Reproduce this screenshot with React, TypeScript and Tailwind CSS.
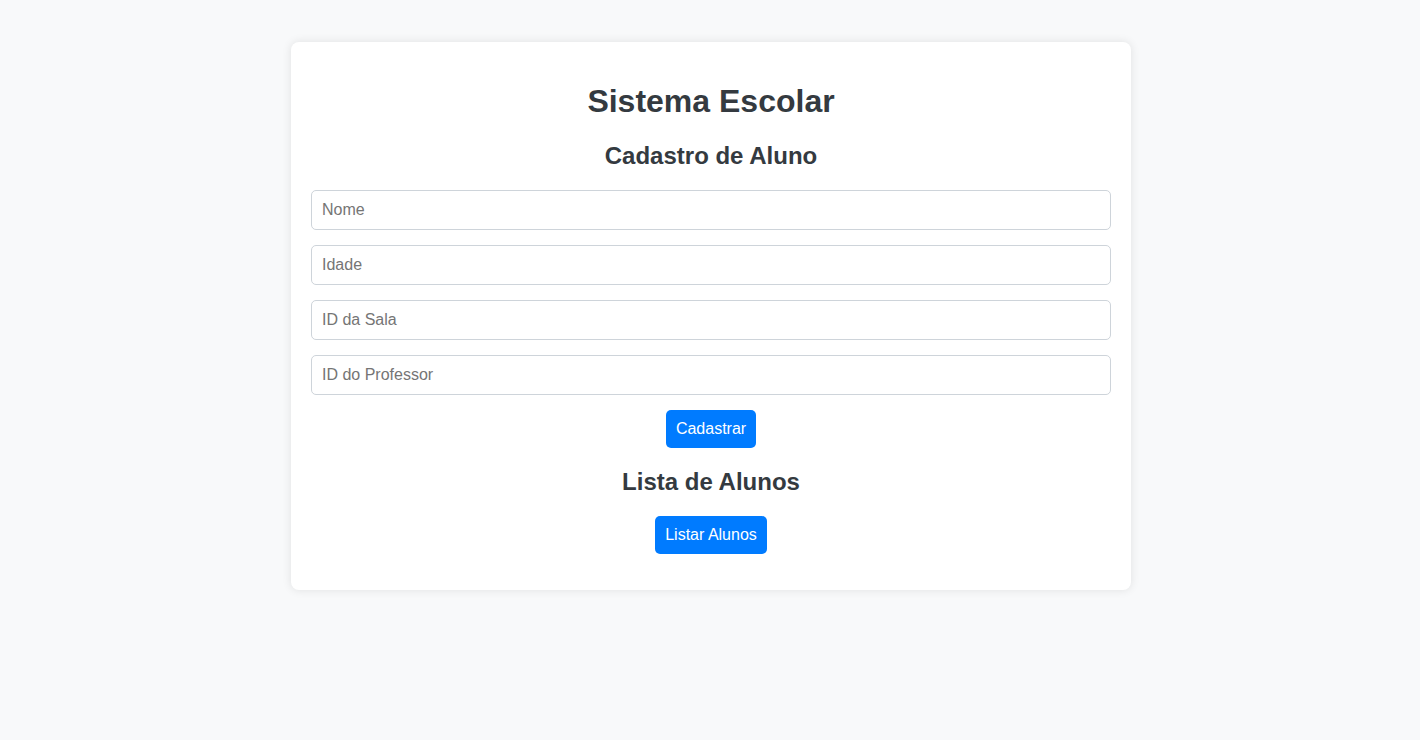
import { useState } from 'react'

type Aluno = { nome: string; idade: string; salaId: string; professorId: string }

const FIELDS: { key: keyof Aluno; placeholder: string; type: string }[] = [
  { key: 'nome', placeholder: 'Nome', type: 'text' },
  { key: 'idade', placeholder: 'Idade', type: 'number' },
  { key: 'salaId', placeholder: 'ID da Sala', type: 'text' },
  { key: 'professorId', placeholder: 'ID do Professor', type: 'text' },
]

export default function App() {
  const [form, setForm] = useState<Aluno>({ nome: '', idade: '', salaId: '', professorId: '' })
  const [alunos, setAlunos] = useState<Aluno[]>([])
  const [lista, setLista] = useState<Aluno[]>([])

  const cadastrar = () => {
    if (!form.nome) return
    setAlunos([...alunos, form])
    setForm({ nome: '', idade: '', salaId: '', professorId: '' })
  }

  return (
    <div className="min-h-screen bg-[#f8f9fa] pt-[42px] pl-[2px] text-[#343a40] font-['Liberation_Sans',Arial,sans-serif]">
      <div className="mx-auto w-[840px] rounded-lg bg-white p-5 shadow-[0_0_10px_rgba(0,0,0,0.1)]">
        <h1 className="mt-[21px] mb-[22px] text-center text-[32px] font-bold leading-[37px]">Sistema Escolar</h1>
        <h2 className="mb-5 text-center text-2xl font-bold leading-[28px]">Cadastro de Aluno</h2>

        <div className="flex flex-col gap-[15px]">
          {FIELDS.map((f) => (
            <input
              key={f.key}
              type={f.type}
              placeholder={f.placeholder}
              value={form[f.key]}
              onChange={(e) => setForm({ ...form, [f.key]: e.target.value })}
              className="h-10 w-full rounded-[5px] border border-[#ced4da] px-2.5 text-base text-[#333] placeholder:text-[#757575] outline-none"
            />
          ))}
        </div>

        <div className="mt-[15px] flex justify-center">
          <button
            onClick={cadastrar}
            className="h-[38px] rounded-[5px] bg-[#007bff] px-2.5 text-base text-white hover:bg-[#0069d9]"
          >
            Cadastrar
          </button>
        </div>

        <h2 className="mt-5 mb-5 text-center text-2xl font-bold leading-[28px]">Lista de Alunos</h2>
        <div className="flex justify-center">
          <button
            onClick={() => setLista(alunos)}
            className="h-[38px] rounded-[5px] bg-[#007bff] px-2.5 text-base text-white hover:bg-[#0069d9]"
          >
            Listar Alunos
          </button>
        </div>

        <ul className="my-4 min-h-0">
          {lista.map((a, i) => (
            <li key={i} className="py-1">
              {a.nome} - {a.idade} anos
            </li>
          ))}
        </ul>
      </div>
    </div>
  )
}
